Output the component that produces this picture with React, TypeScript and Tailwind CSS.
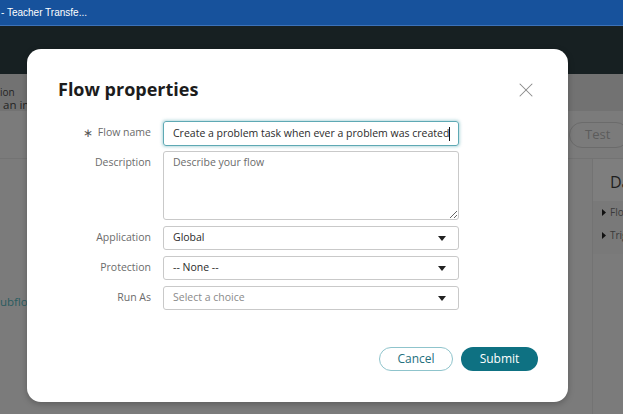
import React from 'react'
import { X } from 'lucide-react'

function Caret(): React.JSX.Element {
  return (
    <svg width="8" height="5" viewBox="0 0 8 5" className="shrink-0">
      <path d="M0 0h8L4 5z" fill="#222" />
    </svg>
  )
}

function Tri(): React.JSX.Element {
  return (
    <svg width="4" height="7" viewBox="0 0 4 7" className="shrink-0">
      <path d="M0 0l4 3.5L0 7z" fill="#111" />
    </svg>
  )
}

function Select({ value, placeholder }: { value?: string; placeholder?: string }): React.JSX.Element {
  return (
    <div className="flex items-center justify-between h-[24px] pl-[9px] pr-[12px] rounded-[3px] border border-[#c9c9c9] bg-white">
      <span className={value ? 'text-[#2b2b2b]' : 'text-[#8a8a8a]'}>{value ?? placeholder}</span>
      <Caret />
    </div>
  )
}

function Row({ label, required, top, className, children }: {
  label: string
  required?: boolean
  top?: boolean
  className?: string
  children: React.ReactNode
}): React.JSX.Element {
  return (
    <div className={`flex gap-[12px] ${className ?? ''}`}>
      <div className={`w-[124px] flex justify-end h-[24px] text-[#6b6b6b] ${top ? 'pt-[4px]' : 'items-center'}`}>
        {required && <span className="mr-[5px] text-[12px] text-[#555]">∗</span>}
        {label}
      </div>
      <div className="w-[296px]">{children}</div>
    </div>
  )
}

export default function App(): React.JSX.Element {
  return (
    <div className="relative w-[623px] h-[414px] overflow-hidden flex flex-col bg-[#7b7b7b] font-['Open_Sans',sans-serif]">
      {/* window title bar */}
      <div className="h-[26px] shrink-0 bg-[#17529c] border-b border-[#3d72b8] flex items-center pl-[1px] text-[10px] text-white font-['Liberation_Sans',sans-serif]">
        - Teacher Transfe...
      </div>

      {/* app header */}
      <div className="h-[48px] shrink-0 bg-[#172022]" />

      {/* dimmed page */}
      <div className="flex-1 flex flex-col">
        <div className="h-[37px] shrink-0 bg-[#727272] pt-[12px] text-[#242424]">
          <div className="text-[10px] leading-[12px]">ion</div>
          <div className="text-[11.5px] leading-[13px]">&nbsp;an in</div>
        </div>
        <div className="h-[48px] shrink-0 border-b border-[#737373] flex items-center justify-end">
          <div className="w-[60px] h-[26px] -mr-[6px] rounded-full border border-[#6b6b6b] flex items-center pl-[15px] text-[13px] text-[#5c5c5c]">
            Test
          </div>
        </div>
        <div className="flex-1 flex">
          <div className="flex-1 pt-[134px] text-[11.5px] text-[#2a5b60]">ubflow</div>
          <div className="w-[31px] border-l border-[#737373] flex flex-col overflow-hidden">
            <div className="h-[42px] bg-[#7e7e7e] flex items-center pl-[17px] pt-[4px] text-[16px] text-[#1e1e1e] whitespace-nowrap">Da</div>
            <div className="h-[53px] bg-[#797979] pt-[5px] text-[10px] text-[#3a3a3a] whitespace-nowrap">
              <div className="flex items-center gap-[4px] pl-[9px] h-[12px]"><Tri />Flow</div>
              <div className="flex items-center gap-[4px] pl-[9px] h-[12px] mt-[11px]"><Tri />Trigger</div>
            </div>
          </div>
        </div>
      </div>

      {/* modal */}
      <div className="absolute left-[27px] top-[49px] w-[541px] h-[353px] rounded-[14px] bg-white shadow-[0_2px_6px_rgba(0,0,0,0.25)] flex flex-col">
        <div className="flex items-start justify-between pl-[31px] pr-[30px] pt-[28px]">
          <h1 className="text-[18px] leading-[25px] font-bold text-[#1c1c1c]">Flow properties</h1>
          <X size={24} strokeWidth={1.05} className="mt-[1px] text-[#8a8a8a]" />
        </div>

        <div className="flex flex-col mt-[19px] text-[10.5px]">
          <Row label="Flow name" required>
            <div className="flex items-center h-[25px] pl-[9px] rounded-[3px] border border-[#5ea9b4] shadow-[0_0_3px_1px_rgba(94,169,180,0.45)] text-[#2b2b2b] whitespace-nowrap overflow-hidden">
              Create a problem task when ever a problem was created
              <span className="inline-block w-px h-[14px] bg-[#111]" />
            </div>
          </Row>

          <Row label="Description" top className="mt-[5px]">
            <textarea
              readOnly
              placeholder="Describe your flow"
              className="block w-full h-[69px] resize px-[9px] py-[3px] rounded-[3px] border border-[#c9c9c9] placeholder:text-[#6b6b6b] outline-none"
            />
          </Row>

          <Row label="Application" className="mt-[6px]">
            <Select value="Global" />
          </Row>

          <Row label="Protection" className="mt-[6px]">
            <Select value="-- None --" />
          </Row>

          <Row label="Run As" className="mt-[6px]">
            <Select placeholder="Select a choice" />
          </Row>
        </div>

        <div className="mt-auto flex justify-end gap-[8px] pr-[30px] pb-[31px] text-[12px]">
          <button className="w-[74px] h-[24px] rounded-full border border-[#8fc4cc] text-[#23707d]">Cancel</button>
          <button className="w-[77px] h-[24px] rounded-full bg-[#0e7182] text-white">Submit</button>
        </div>
      </div>
    </div>
  )
}
